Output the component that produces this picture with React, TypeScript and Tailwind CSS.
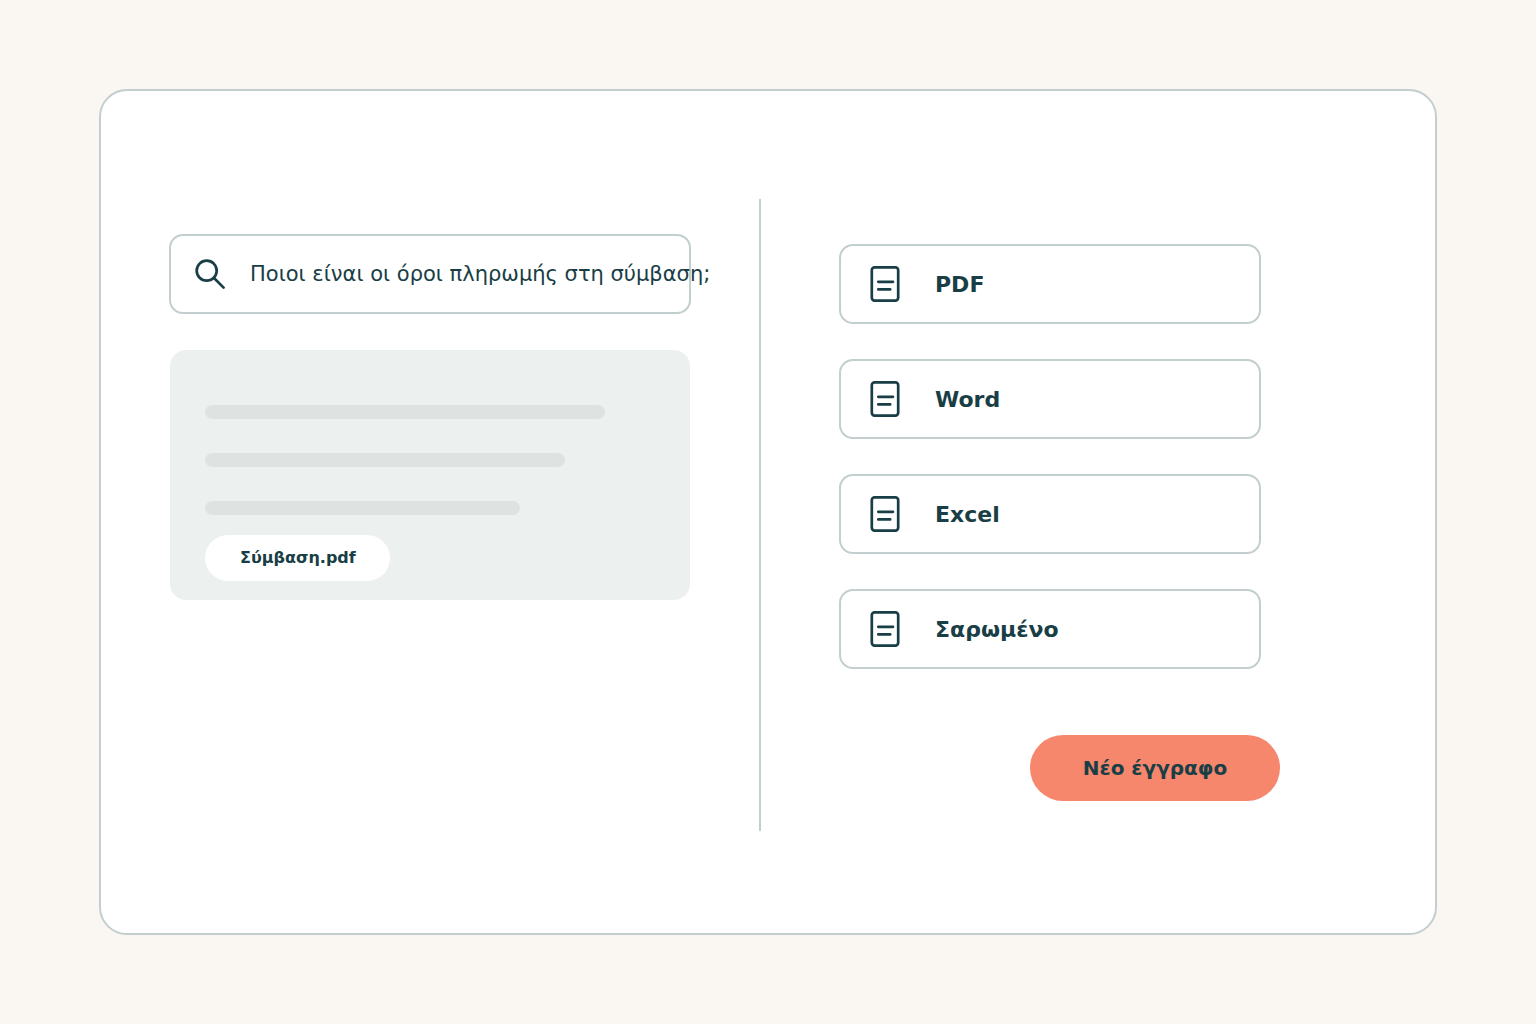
import React from "react";

const DOCUMENT_TYPES = ["PDF", "Word", "Excel", "Σαρωμένο"];

function SearchIcon() {
  return (
    <svg
      viewBox="0 0 36 36"
      className="size-9 shrink-0"
      fill="none"
      stroke="currentColor"
      strokeWidth="2.7"
      strokeLinecap="round"
      aria-hidden="true"
    >
      <circle cx="14.7" cy="14.7" r="10" />
      <path d="M22 22 31.6 31.6" />
    </svg>
  );
}

function DocumentIcon() {
  return (
    <svg
      viewBox="0 0 36 40"
      className="h-10 w-9 shrink-0"
      fill="none"
      stroke="currentColor"
      strokeWidth="2.7"
      strokeLinecap="round"
      aria-hidden="true"
    >
      <rect x="4.8" y="3.4" width="26.4" height="33.2" rx="2.8" />
      <path d="M11.3 17.8H26M11.3 25.4H23.2" />
    </svg>
  );
}

function SearchPanel() {
  return (
    <section className="flex flex-col px-[68px] pt-[35px]">
      <label className="flex h-20 items-center rounded-[14px] border-2 border-[#c3cecf] pl-[21px]">
        <SearchIcon />
        <input
          type="text"
          aria-label="Αναζήτηση"
          defaultValue="Ποιοι είναι οι όροι πληρωμής στη σύμβαση;"
          className="ml-[22px] w-[480px] shrink-0 bg-transparent text-[21px] leading-8 outline-none"
        />
      </label>
      <div className="mx-px mt-9 flex h-[250px] flex-col items-start rounded-2xl bg-[#ecf0ef] px-[35px] pt-[55px]">
        <div className="flex w-full flex-col gap-[34px]">
          <div className="h-3.5 w-[400px] rounded-full bg-[#dee3e1]" />
          <div className="h-3.5 w-[360px] rounded-full bg-[#dee3e1]" />
          <div className="h-3.5 w-[315px] rounded-full bg-[#dee3e1]" />
        </div>
        <button
          type="button"
          className="mt-5 h-[46px] w-[185px] rounded-full bg-white pl-[35px] text-left text-base font-bold"
        >
          Σύμβαση.pdf
        </button>
      </div>
    </section>
  );
}

function DocumentsPanel() {
  return (
    <section className="flex flex-col pt-[45px] pr-[155px] pl-[78px]">
      <div className="mr-[19px] flex flex-col gap-[35px]">
        {DOCUMENT_TYPES.map((name) => (
          <button
            key={name}
            type="button"
            className="flex h-20 items-center rounded-[14px] border-2 border-[#c3cecf] pl-[26px] text-[22px] font-bold"
          >
            <DocumentIcon />
            <span className="ml-8">{name}</span>
          </button>
        ))}
      </div>
      <button
        type="button"
        className="mt-[66px] h-[66px] w-[250px] self-end rounded-full bg-[#f6866c] text-xl font-bold"
      >
        Νέο έγγραφο
      </button>
    </section>
  );
}

export default function App() {
  return (
    <div className="flex min-h-screen bg-[#faf6f1] px-[99px] py-[89px] font-['DejaVu_Sans',sans-serif] text-[#193e45]">
      <main className="grid flex-1 grid-cols-[minmax(0,658fr)_2px_minmax(0,674fr)] rounded-[28px] border-2 border-[#c3cecf] bg-white pt-[108px] pb-[102px]">
        <SearchPanel />
        <div className="bg-[#c3cecf]" />
        <DocumentsPanel />
      </main>
    </div>
  );
}
